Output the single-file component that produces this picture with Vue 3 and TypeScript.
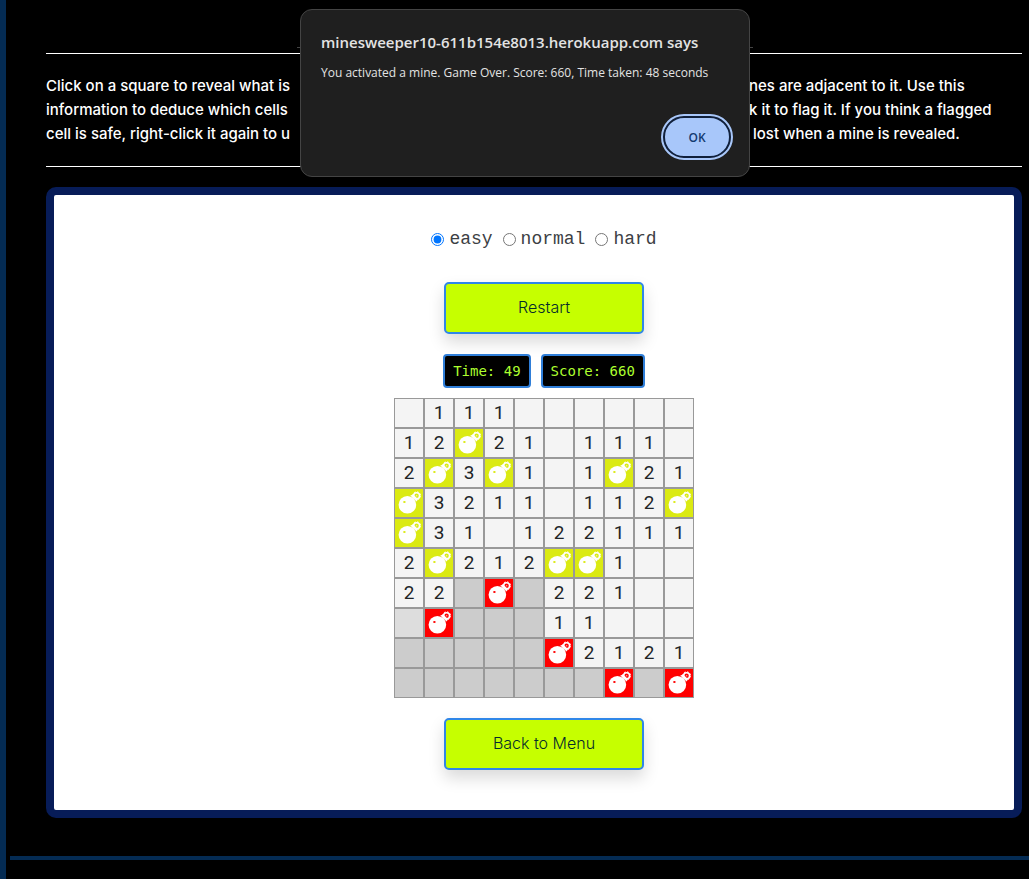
<script setup lang="ts">
import { ref } from 'vue'

type Level = 'easy' | 'normal' | 'hard'

const levels: Level[] = ['easy', 'normal', 'hard']
const level = ref<Level>('easy')

// '.' revealed and empty, '#' covered, 'h' covered and hovered, 'F' flagged mine, 'X' exploded mine
const rows: string[] = [
  '.111......',
  '12F21.111.',
  '2F3F1.1F21',
  'F3211.112F',
  'F31.122111',
  '2F212FF1..',
  '22#X#221..',
  'hX###11...',
  '#####X2121',
  '#######X#X',
]
const cells: string[] = rows.join('').split('')

const kinds: Record<string, string> = {
  '#': 'covered',
  h: 'hovered',
  F: 'flagged',
  X: 'exploded',
}
const kindOf = (c: string): string => kinds[c] ?? 'open'
const isMine = (c: string): boolean => c === 'F' || c === 'X'
const isNumber = (c: string): boolean => c >= '1' && c <= '8'
</script>

<template>
  <div class="page">
    <main class="content">
      <header class="top"><span class="title-rule"></span></header>
      <div class="intro">
        <p>
          Click on a square to reveal what is<br />
          information to deduce which cells<br />
          cell is safe, right-click it again to u
        </p>
        <p>
          nes are adjacent to it. Use this<br />
          k it to flag it. If you think a flagged<br />
          &nbsp;lost when a mine is revealed.
        </p>
      </div>
      <section class="game">
        <div class="levels">
          <label v-for="l in levels" :key="l">
            <input v-model="level" type="radio" name="level" :value="l" />{{ l }}
          </label>
        </div>
        <button class="action" type="button">Restart</button>
        <div class="stats">
          <div class="stat">Time: 49</div>
          <div class="stat">Score: 660</div>
        </div>
        <div class="board">
          <button
            v-for="(c, i) in cells"
            :key="i"
            type="button"
            class="cell"
            :class="kindOf(c)"
          >
            <svg v-if="isMine(c)" viewBox="0 0 28 28" aria-hidden="true">
              <circle cx="12.4" cy="15.8" r="8.8" fill="#fff" />
              <path d="M15.2 6.6l6.4 6 1.4-2.4-4.6-4.6z" fill="#fff" />
              <circle cx="21.6" cy="6.8" r="3" fill="none" stroke="#fff" stroke-width="1.6" />
              <circle cx="21.6" cy="6.8" r="4" fill="none" stroke="#fff" stroke-width="1" stroke-dasharray="1.6 1.54" />
              <circle cx="21.6" cy="6.8" r=".8" fill="#fff" fill-opacity=".6" />
              <ellipse class="glint" cx="9.4" cy="13" rx="1.3" ry="1" />
            </svg>
            <template v-else-if="isNumber(c)">{{ c }}</template>
          </button>
        </div>
        <button class="action" type="button">Back to Menu</button>
      </section>
    </main>
    <footer class="foot"></footer>

    <div class="dialog" role="alertdialog" aria-labelledby="dlg-title" aria-describedby="dlg-text">
      <h2 id="dlg-title">minesweeper10-611b154e8013.herokuapp.com says</h2>
      <p id="dlg-text">You activated a mine. Game Over. Score: 660, Time taken: 48 seconds</p>
      <button class="ok" type="button">OK</button>
    </div>
  </div>
</template>

<style>
body {
  margin: 0;
  background: #000;
}
</style>

<style scoped>
.page {
  position: relative;
  box-sizing: border-box;
  min-height: 100vh;
  overflow: hidden;
  border-left: 6px solid #042b53;
  background: #000;
  color: #fff;
  font-family: Inter, sans-serif;
}
.page::before {
  content: '';
  position: absolute;
  left: -6px;
  top: 68px;
  bottom: 0;
  width: 1px;
  background: #333;
  border-right: 1px solid #000;
}
.content {
  padding: 0 7px 38px 40px;
}
.top {
  display: flex;
  justify-content: center;
  height: 53px;
  padding-right: 18px;
  border-bottom: 1px solid #fff;
}
.title-rule {
  width: 456px;
  height: 47px;
  border-bottom: 1px solid #444;
}
.intro {
  display: grid;
  grid-template-columns: 450px auto;
  column-gap: 253px;
  justify-content: start;
  padding: 20px 0;
  border-bottom: 1px solid #fff;
  font-size: 15px;
  font-weight: 500;
  line-height: 24px;
  white-space: nowrap;
}
.intro p {
  margin: 0;
}
.game {
  display: flex;
  flex-direction: column;
  align-items: center;
  margin-top: 20px;
  padding: 32px 0 40px 20px;
  border: 8px solid #071c58;
  border-radius: 10px;
  background: #fff;
  color: #212529;
}
.levels {
  display: flex;
  gap: 10px;
  height: 24px;
  color: #3c4044;
  font-family: 'Liberation Mono', monospace;
  font-size: 18px;
  line-height: 24px;
}
.levels label {
  display: flex;
  align-items: center;
}
.levels input {
  width: 13px;
  height: 13px;
  margin: 0 5px 0 0;
  accent-color: #0075ff;
}
.action {
  width: 200px;
  height: 52px;
  margin: 0;
  padding: 0 0 2px;
  border: 2px solid #2f86e8;
  border-radius: 5px;
  background: #c6ff00;
  box-shadow: 0 8px 16px rgba(0, 0, 0, 0.15);
  color: #052c2c;
  font-family: Inter, sans-serif;
  font-size: 16px;
  font-weight: 300;
}
.levels + .action {
  margin-top: 31px;
}
.stats {
  display: flex;
  gap: 10px;
  margin: 20px 0 10px;
}
.stat {
  padding: 5px 8px;
  border: 2px solid #2f7ed8;
  border-radius: 4px;
  background: #000;
  color: #adff2f;
  font-family: 'DejaVu Sans Mono', monospace;
  font-size: 14px;
  line-height: 20px;
}
.board {
  display: grid;
  grid-template-columns: repeat(10, 30px);
  grid-auto-rows: 30px;
  margin-bottom: 20px;
}
.cell {
  display: flex;
  align-items: center;
  justify-content: center;
  margin: 0;
  padding: 0;
  border: 1px solid #999;
  background: #f4f4f4;
  color: #212529;
  font-family: Roboto, sans-serif;
  font-size: 19px;
  line-height: 28px;
}
.cell svg {
  width: 28px;
  height: 28px;
}
.covered {
  background: #ccc;
}
.hovered {
  background: #ddd;
}
.flagged {
  background: #dbea12;
}
.exploded {
  background: #f00;
}
.flagged .glint {
  fill: #dbea12;
}
.exploded .glint {
  fill: #f00;
}
.foot {
  height: 15px;
  margin-left: 4px;
  border-top: 4px solid #042b53;
}
.dialog {
  position: absolute;
  top: 9px;
  right: 0;
  left: 15px;
  box-sizing: border-box;
  display: flex;
  flex-direction: column;
  width: 450px;
  margin: 0 auto;
  padding: 21px 18px 18px 20px;
  border: 1px solid #444;
  border-radius: 12px;
  background: #1f1f1f;
  color: #e3e3e3;
  font-family: 'Open Sans', sans-serif;
}
.dialog h2 {
  margin: 0;
  font-size: 15px;
  font-weight: 600;
  line-height: 22px;
  white-space: nowrap;
}
.dialog p {
  margin: 10px 0 33px;
  font-size: 12px;
  line-height: 20px;
  white-space: nowrap;
}
.ok {
  align-self: flex-end;
  width: 68px;
  height: 42px;
  padding: 0;
  border: 2px solid #10203c;
  border-radius: 21px;
  outline: 2px solid #a8c7fa;
  background: #a8c7fa;
  color: #143a70;
  font-family: 'Open Sans', sans-serif;
  font-size: 12px;
  font-weight: 600;
}
</style>
